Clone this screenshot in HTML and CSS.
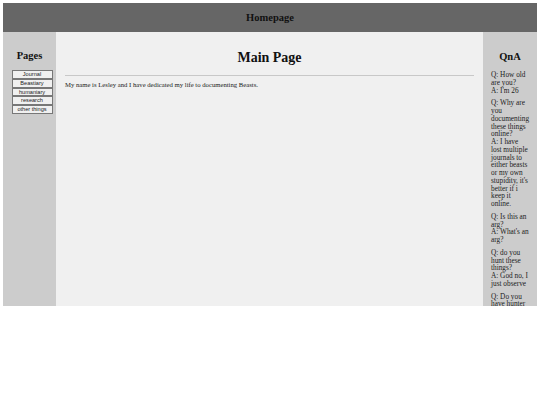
FILE: index.html
```html
<!DOCTYPE html>
<html>
<head>
<meta charset="utf-8">
<link rel="stylesheet" href="styles.css">
</head>
<body>
<div class="page">
  <header class="top"><h1>Homepage</h1></header>
  <div class="cols">
    <nav class="left">
      <h2>Pages</h2>
      <button class="btn">Journal</button>
      <button class="btn">Beastiary</button>
      <button class="btn">humaniary</button>
      <button class="btn">research</button>
      <button class="btn">other things</button>
    </nav>
    <main class="main">
      <h2 class="title">Main Page</h2>
      <hr class="rule">
      <p class="intro">My name is Lesley and I have dedicated my life to documenting Beasts.</p>
    </main>
    <aside class="right">
      <h2>QnA</h2>
      <p>Q: How old are you?<br>A: I'm 26</p>
      <p>Q: Why are you documenting these things online?<br>A: I have lost multiple journals to either beasts or my own stupidity, it's better if i keep it online.</p>
      <p>Q: Is this an arg?<br>A: What's an arg?</p>
      <p>Q: do you hunt these things?<br>A: God no, I just observe</p>
      <p>Q: Do you have hunter friends?<br>A: A few</p>
    </aside>
  </div>
</div>
</body>
</html>
```

FILE: styles.css
```css
html, body { margin: 0; padding: 0; background: #fff; }
body { font-family: "Liberation Serif", "Times New Roman", serif; color: #111; }
.page { margin: 3px; width: 534px; height: 303px; display: flex; flex-direction: column; overflow: hidden; }
.top { background: #666; height: 29px; display: flex; align-items: center; justify-content: center; flex: none; }
.top h1 { margin: 0; font-size: 10.5px; font-weight: bold; color: #111; }
.cols { flex: 1; display: flex; min-height: 0; }
.left { width: 53px; background: #ccc; display: flex; flex-direction: column; align-items: center; padding-top: 18px; box-sizing: border-box; }
.left h2 { margin: 0 0 9px; font-size: 10.5px; }
.btn { width: 41px; height: 8.8px; margin: 0 0 0 5px; padding: 0; font-family: "Liberation Sans", Arial, sans-serif; font-size: 5.6px; line-height: 7px; background: #f0f0f0; border: 0.8px solid #777; color: #222; box-sizing: border-box; }
.main { flex: 1; background: #f0f0f0; padding: 18px 9px 0; }
.title { margin: 0; text-align: center; font-size: 14px; line-height: 16px; }
.rule { margin: 9px 0 0; border: 0; border-top: 1px solid #c8c8c8; height: 0; }
.intro { margin: 5px 0 0; font-size: 6.7px; color: #222; }
.right { width: 54px; background: #ccc; padding: 19px 7px 0 8px; box-sizing: border-box; overflow: hidden; }
.right h2 { margin: 0 0 9px; text-align: center; font-size: 10.5px; padding-right: 1px; }
.right p { margin: 0 0 5px; font-size: 7.3px; line-height: 7.75px; color: #222; }
```
